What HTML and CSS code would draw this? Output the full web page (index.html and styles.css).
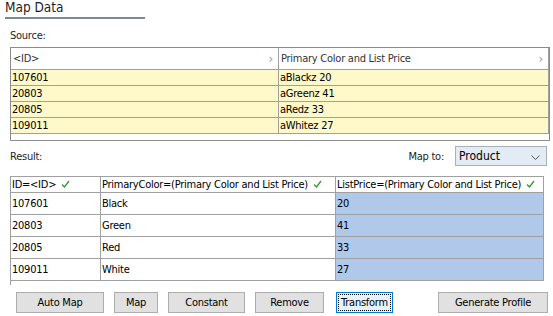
FILE: index.html
```html
<!DOCTYPE html>
<html>
<head>
<meta charset="utf-8">
<link rel="stylesheet" href="styles.css">
</head>
<body>
<div class="title">Map Data</div>
<div class="label src-label">Source:</div>
<div class="src">
  <div class="src-grid">
    <div class="hcell">&lt;ID&gt;<span class="arr">&#x203A;</span></div>
    <div class="hcell">Primary Color and List Price<span class="arr">&#x203A;</span></div>
    <div class="ycell">107601</div><div class="ycell">aBlackz 20</div>
    <div class="ycell">20803</div><div class="ycell">aGreenz 41</div>
    <div class="ycell">20805</div><div class="ycell">aRedz 33</div>
    <div class="ycell">109011</div><div class="ycell">aWhitez 27</div>
  </div>
</div>
<div class="result-bar">
  <div class="label">Result:</div>
  <div class="mapto">
    <span class="label">Map to:</span>
    <div class="select">Product
      <svg class="chev" width="9" height="5" viewBox="0 0 9 5"><polyline points="0.5,0.5 4.5,4.5 8.5,0.5" fill="none" stroke="#555" stroke-width="1"/></svg>
    </div>
  </div>
</div>
<div class="res-wrap">
  <div class="res-grid">
    <div class="rh">ID=&lt;ID&gt; <svg class="ck" width="9" height="8" viewBox="0 0 9 8"><polyline points="1,4.5 3.5,7 8,1" fill="none" stroke="#2f9a2f" stroke-width="1.3"/></svg></div>
    <div class="rh">PrimaryColor=(Primary Color and List Price) <svg class="ck" width="9" height="8" viewBox="0 0 9 8"><polyline points="1,4.5 3.5,7 8,1" fill="none" stroke="#2f9a2f" stroke-width="1.3"/></svg></div>
    <div class="rh">ListPrice=(Primary Color and List Price) <svg class="ck" width="9" height="8" viewBox="0 0 9 8"><polyline points="1,4.5 3.5,7 8,1" fill="none" stroke="#2f9a2f" stroke-width="1.3"/></svg></div>
    <div class="rc">107601</div><div class="rc">Black</div><div class="rc blue">20</div>
    <div class="rc">20803</div><div class="rc">Green</div><div class="rc blue">41</div>
    <div class="rc">20805</div><div class="rc">Red</div><div class="rc blue">33</div>
    <div class="rc">109011</div><div class="rc">White</div><div class="rc blue">27</div>
  </div>
  <div class="res-tail"></div>
</div>
<div class="buttons">
  <div class="btn w-auto">Auto Map</div>
  <div class="btn w-map">Map</div>
  <div class="btn w-const">Constant</div>
  <div class="btn w-rem">Remove</div>
  <div class="btn w-tr focus"><span class="dots">Transform</span></div>
  <div class="btn w-gen">Generate Profile</div>
</div>
</body>
</html>
```
FILE: styles.css
```css
html, body {
  margin: 0;
  padding: 0;
  background: #ffffff;
}
body {
  width: 553px;
  height: 316px;
  overflow: hidden;
  font-family: "DejaVu Sans Condensed", "Liberation Sans", sans-serif;
  font-size: 11px;
  letter-spacing: -0.25px;
  color: #000;
}
.title {
  margin-left: 5px;
  width: 140px;
  height: 17px;
  line-height: 15px;
  font-size: 13.5px;
  letter-spacing: 0;
  color: #1e1e1e;
  border-bottom: 2px solid #7c8898;
}
.label {
  line-height: 13px;
  color: #1e1e1e;
}
.src-label {
  margin: 10px 0 5px 10px;
}
.src {
  margin-left: 10px;
  width: 540px;
  height: 94px;
  box-sizing: border-box;
  border: 1px solid #8b8b8b;
  background: #fff;
}
.src-grid {
  display: grid;
  grid-template-columns: 268px 270px;
}
.hcell {
  height: 22px;
  box-sizing: border-box;
  border-right: 1px solid #a0a0a0;
  border-bottom: 1px solid #a0a0a0;
  padding: 0 5px 0 2px;
  line-height: 21px;
  color: #333;
  display: flex;
  justify-content: space-between;
}
.arr {
  color: #9a9a9a;
  font-size: 13px;
}
.ycell {
  height: 16px;
  box-sizing: border-box;
  background: #fff8c8;
  border-right: 1px solid #a0a0a0;
  border-bottom: 1px solid #a0a0a0;
  padding-left: 1px;
  line-height: 15px;
}
.result-bar {
  display: flex;
  justify-content: space-between;
  align-items: center;
  margin: 5px 6px 0 10px;
  height: 20px;
}
.mapto {
  display: flex;
  align-items: center;
  gap: 11px;
}
.select {
  width: 92px;
  height: 20px;
  box-sizing: border-box;
  border: 1px solid #a7b0ba;
  background: #e3ebf4;
  padding-left: 3px;
  line-height: 17px;
  font-size: 12px;
  letter-spacing: 0;
  display: flex;
  justify-content: space-between;
  align-items: center;
}
.chev {
  margin-right: 6px;
  margin-top: 2px;
}
.res-wrap {
  margin: 10px 0 0 10px;
  height: 109px;
  overflow: hidden;
}
.res-grid {
  display: grid;
  grid-template-columns: 91px 235px 208px;
  width: 534px;
  border-top: 1px solid #a0a0a0;
}
.res-grid > div {
  box-sizing: border-box;
  border-right: 1px solid #a0a0a0;
  border-bottom: 1px solid #a0a0a0;
  padding-left: 1px;
}
.res-grid > div:nth-child(3n+1) {
  border-left: 1px solid #a0a0a0;
}
.res-tail {
  height: 10px;
  border-left: 1px solid #a0a0a0;
}
.rh {
  height: 16px;
  line-height: 15px;
  white-space: nowrap;
  overflow: hidden;
}
.ck {
  margin-left: 2px;
  vertical-align: 0;
}
.rc {
  height: 22px;
  line-height: 21px;
}
.blue {
  background: #b0c8ea;
}
.buttons {
  display: flex;
  gap: 10px;
  margin: 7px 0 0 16px;
}
.btn {
  height: 21px;
  box-sizing: border-box;
  border: 1px solid #adadad;
  background: #e1e1e1;
  display: flex;
  align-items: center;
  justify-content: center;
  line-height: 13px;
  white-space: nowrap;
}
.w-auto { width: 88px; }
.w-map { width: 44px; }
.w-const { width: 77px; }
.w-rem { width: 69px; }
.w-tr { width: 57px; margin-left: 2px; }
.w-gen { width: 110px; margin-left: 35px; }
.focus {
  border-color: #0078d7;
  background: #e5f1fb;
  padding: 1px;
}
.dots {
  flex: 1;
  align-self: stretch;
  border: 1px dotted #000;
  display: flex;
  align-items: center;
  justify-content: center;
}
```
